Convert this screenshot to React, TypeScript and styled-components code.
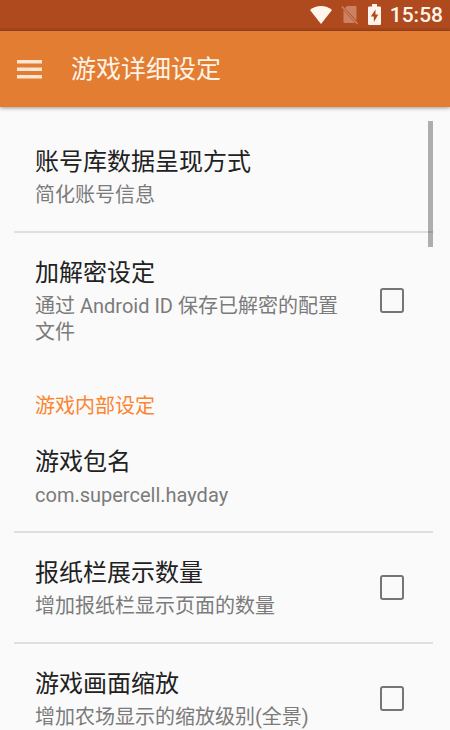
import React from "react";
import styled, { createGlobalStyle, css } from "styled-components";

const GlobalStyle = createGlobalStyle`
  *, *::before, *::after { box-sizing: border-box; }
  body {
    margin: 0;
    background: #fafafa;
    font-family: Roboto, "Noto Sans CJK SC", sans-serif;
  }
`;

const Screen = styled.div`
  display: flex;
  flex-direction: column;
  height: 100vh;
  overflow: hidden;
`;

const StatusBar = styled.div`
  display: flex;
  flex: none;
  align-items: center;
  justify-content: flex-end;
  gap: 9px;
  height: 31px;
  padding: 0 7px 2px 0;
  background: linear-gradient(#af4a1e 0 27px, #9f431b 31px);
  color: #fff5ec;

  svg { display: block; }
`;

const Clock = styled.time`
  font-size: 21px;
  font-weight: 500;
  line-height: 28px;
`;

const AppBar = styled.header`
  position: relative;
  z-index: 1;
  display: flex;
  flex: none;
  align-items: center;
  gap: 29px;
  height: 76px;
  padding: 2px 17px 0;
  background: #e27d31;
  box-shadow: 0 1px 4px rgba(0, 0, 0, 0.4);
`;

const MenuButton = styled.button`
  display: block;
  padding: 0;
  border: 0;
  background: none;
  color: #fde5d3;
  cursor: pointer;

  svg { display: block; }
`;

const Heading = styled.h1`
  margin: 0;
  color: #fff3e8;
  font-size: 25px;
  font-weight: 400;
  line-height: 32px;
`;

const Viewport = styled.div`
  position: relative;
  flex: 1;
  min-height: 0;
`;

const ScrollThumb = styled.span`
  position: absolute;
  top: 14px;
  right: 17px;
  width: 5px;
  height: 126px;
  background: rgba(0, 0, 0, 0.3);
  pointer-events: none;
`;

const List = styled.main`
  height: 100%;
  padding: 13px 17px 0 14px;
  overflow-y: auto;
  scrollbar-width: none;
`;

const rowStyle = css<{ $divided?: boolean }>`
  display: flex;
  align-items: center;
  gap: 29px;
  width: 100%;
  padding: 23px 29px 23px 21px;
  border: 0;
  border-top: 2px solid ${(p) => (p.$divided ? "#dfdfdf" : "transparent")};
  background: none;
  font-family: inherit;
  text-align: left;
  cursor: pointer;
`;

const ButtonRow = styled.button<{ $divided?: boolean }>`
  ${rowStyle}
`;

const CheckRow = styled.label<{ $divided?: boolean }>`
  ${rowStyle}
`;

const Texts = styled.span`
  display: flex;
  flex: 1;
  flex-direction: column;
  gap: 3px;
  min-width: 0;
`;

const Title = styled.span`
  color: #212121;
  font-size: 24px;
  line-height: 34px;
`;

const Summary = styled.span`
  color: #7b7b7b;
  font-size: 20px;
  line-height: 26px;
`;

const Category = styled.h2`
  margin: 0;
  padding: 24px 21px 0;
  color: #fb8530;
  font-size: 20px;
  font-weight: 400;
  line-height: 28px;
`;

const Checkbox = styled.input`
  flex: none;
  width: 24px;
  height: 25px;
  margin: 0;
  appearance: none;
  border: 2px solid #757575;
  border-radius: 3px;
  background: transparent;

  &:checked {
    border-color: #e27d31;
    background: #e27d31;
  }
`;

type RowProps = { title: string; summary: string; divided?: boolean };

function Entry({ title, summary, divided }: RowProps) {
  return (
    <ButtonRow type="button" $divided={divided}>
      <Texts>
        <Title>{title}</Title>
        <Summary>{summary}</Summary>
      </Texts>
    </ButtonRow>
  );
}

function CheckEntry({ title, summary, divided }: RowProps) {
  return (
    <CheckRow $divided={divided}>
      <Texts>
        <Title>{title}</Title>
        <Summary>{summary}</Summary>
      </Texts>
      <Checkbox type="checkbox" />
    </CheckRow>
  );
}

function WifiIcon() {
  return (
    <svg width="22" height="20" viewBox="0 0 22 20" fill="currentColor" aria-hidden="true">
      <path d="M0 5C6 -.5 16 -.5 22 5L11 19Z" />
    </svg>
  );
}

function NoSimIcon() {
  return (
    <svg width="18" height="20" viewBox="0 0 18 20" aria-hidden="true">
      <path d="M6 1h8.500q1 0 1 1v13.500L4 3Z" fill="#cc8262" />
      <path d="M2.500 5L14 18H3.500q-1 0-1-1Z" fill="#cc8262" />
      <path d="M1 1.500L16.500 19" stroke="#cc8262" strokeWidth="1.500" />
    </svg>
  );
}

function BatteryIcon() {
  return (
    <svg width="13" height="21" viewBox="0 0 13 21" aria-hidden="true">
      <path
        fill="currentColor"
        fillRule="evenodd"
        d="M4 0h5v2.500h2.800q1.200 0 1.200 1.200v16q0 1.300-1.200 1.300H1.200Q0 21 0 19.700v-16q0-1.200 1.200-1.200H4ZM7.500 5.500L2.800 12.500h3v5.500l4.500-7.500H7.500Z"
      />
    </svg>
  );
}

export default function App() {
  return (
    <Screen>
      <GlobalStyle />
      <StatusBar>
        <WifiIcon />
        <NoSimIcon />
        <BatteryIcon />
        <Clock>15:58</Clock>
      </StatusBar>
      <AppBar>
        <MenuButton type="button" aria-label="菜单">
          <svg width="25" height="20" viewBox="0 0 25 20" fill="currentColor">
            <path d="M0 0h25v3.500H0zM0 7.500h25V11H0zM0 15h25v3.500H0z" />
          </svg>
        </MenuButton>
        <Heading>游戏详细设定</Heading>
      </AppBar>
      <Viewport>
        <List>
          <Entry title="账号库数据呈现方式" summary="简化账号信息" />
          <CheckEntry divided title="加解密设定" summary="通过 Android ID 保存已解密的配置文件" />
          <Category>游戏内部设定</Category>
          <Entry title="游戏包名" summary="com.supercell.hayday" />
          <CheckEntry divided title="报纸栏展示数量" summary="增加报纸栏显示页面的数量" />
          <CheckEntry divided title="游戏画面缩放" summary="增加农场显示的缩放级别(全景)" />
        </List>
        <ScrollThumb />
      </Viewport>
    </Screen>
  );
}
